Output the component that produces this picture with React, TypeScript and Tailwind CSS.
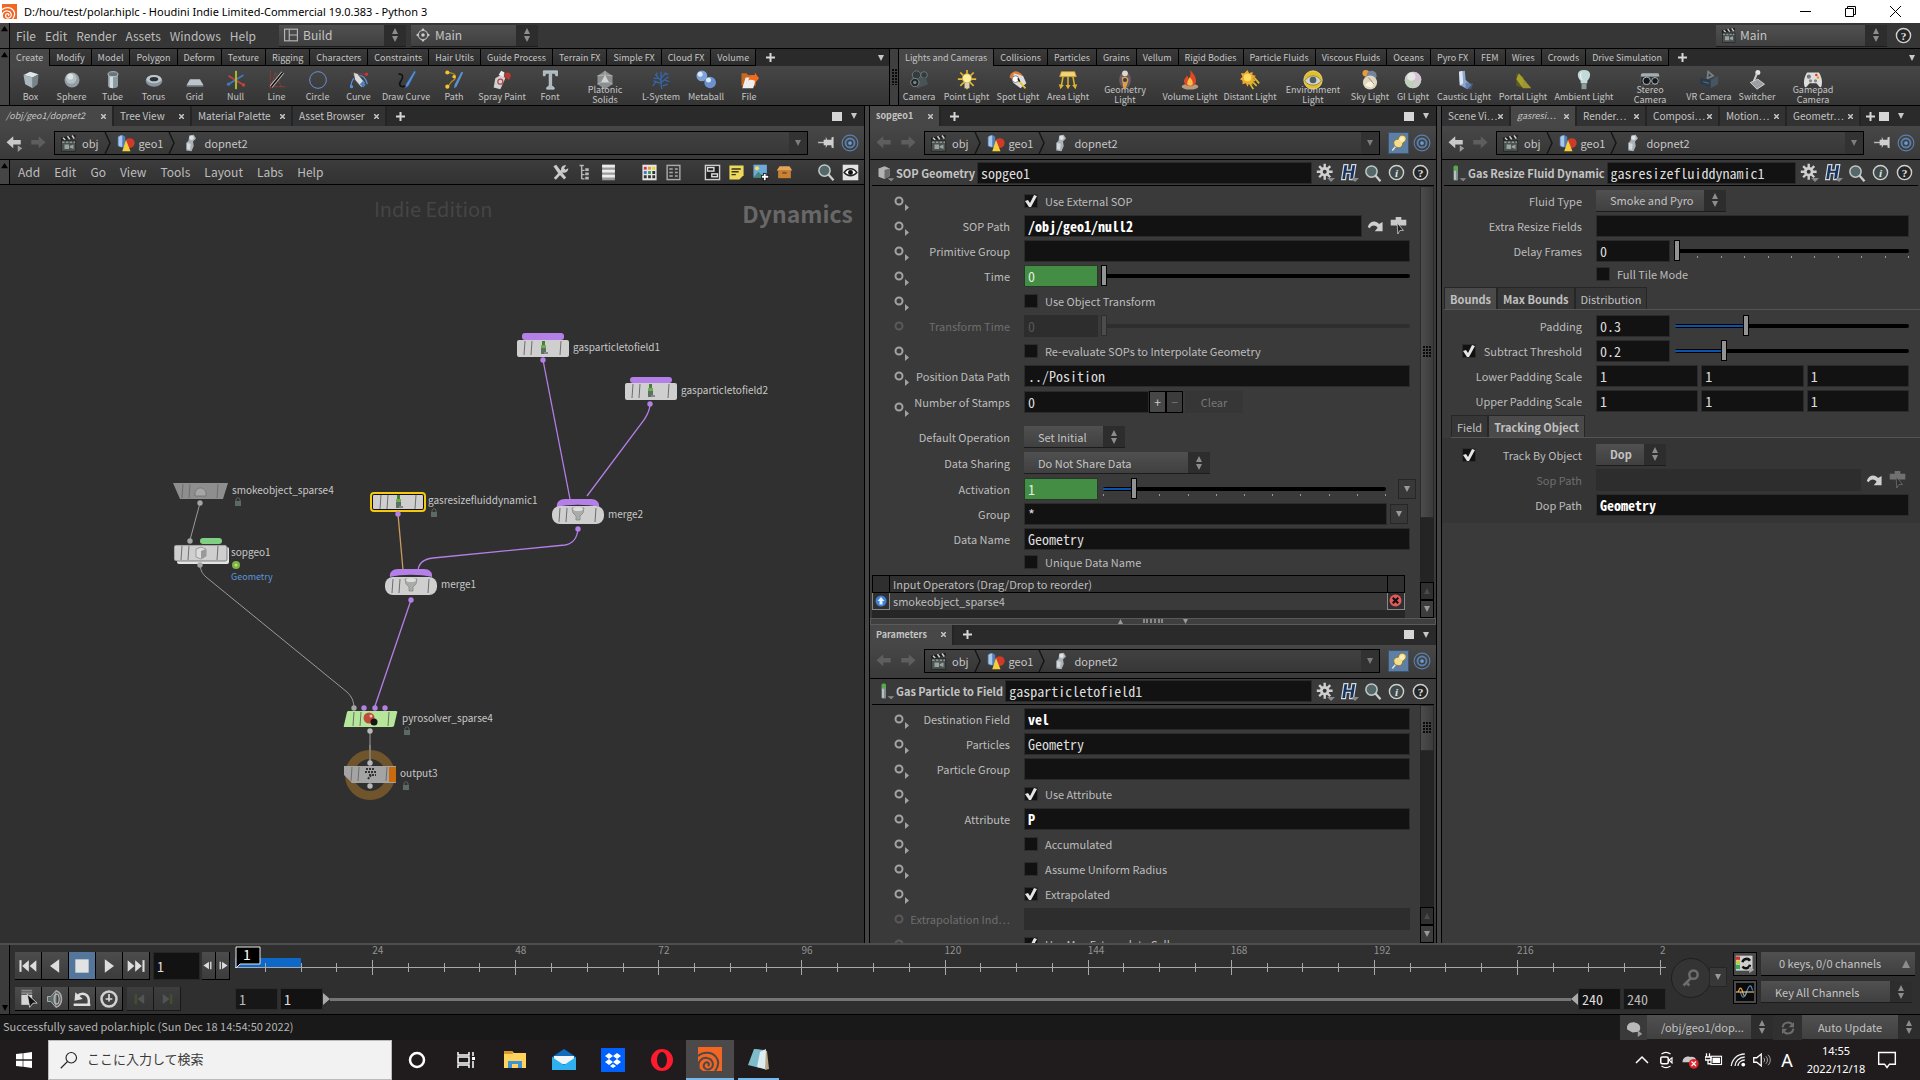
import type { ReactNode } from "react";

const ui = "[font-family:'Noto_Sans_CJK_JP','Noto_Sans',sans-serif]";
const win = "[font-family:'Noto_Sans','Noto_Sans_CJK_JP',sans-serif]";
const mono = "[font-family:'Noto_Sans_Mono_CJK_JP','Liberation_Mono',monospace]";

/* ---------- shelf data ---------- */

type Tool = { name: string; w: string; icon: ReactNode };

const leftTabs = ["Create", "Modify", "Model", "Polygon", "Deform", "Texture", "Rigging", "Characters", "Constraints", "Hair Utils", "Guide Process", "Terrain FX", "Simple FX", "Cloud FX", "Volume"];
const rightTabs = ["Lights and Cameras", "Collisions", "Particles", "Grains", "Vellum", "Rigid Bodies", "Particle Fluids", "Viscous Fluids", "Oceans", "Pyro FX", "FEM", "Wires", "Crowds", "Drive Simulation"];
const twoLine = ["Platonic Solids", "Geometry Light", "Environment Light", "Stereo Camera", "Gamepad Camera"];

const leftTools: Tool[] = [
  { name: "Box", w: "w-[41px]", icon: <><path d="M3 6l8-4 10 3-7 4z" fill="#dfe6ea" /><path d="M3 6l11 3v13L5 17z" fill="#aab6bd" /><path d="M14 9l7-4-1 12-6 5z" fill="#76838b" /></> },
  { name: "Sphere", w: "w-[41px]", icon: <><circle cx="12" cy="12" r="9" fill="#929da3" /><circle cx="11" cy="10" r="6.5" fill="#b4bfc4" /><circle cx="10" cy="8" r="3.5" fill="#dbe2e5" /></> },
  { name: "Tube", w: "w-[41px]", icon: <><path d="M6 5v14c0 4 12 4 12 0V5z" fill="#8d9ba3" /><path d="M8 6v15l4 1V7z" fill="#d2dade" /><ellipse cx="12" cy="5" rx="6" ry="3" fill="#68757d" stroke="#c4ced3" /></> },
  { name: "Torus", w: "w-[41px]", icon: <><ellipse cx="12" cy="13" rx="10" ry="7" fill="#87959e" /><ellipse cx="12" cy="11" rx="9" ry="5" fill="#bcc6cc" /><ellipse cx="12" cy="11" rx="5" ry="2.5" fill="#2c3134" /></> },
  { name: "Grid", w: "w-[41px]", icon: <><path d="M6 11h12l4 7H2z" fill="#bcc5ca" /><path d="M2 18h20v2H2z" fill="#7f8a90" /></> },
  { name: "Null", w: "w-[41px]", icon: <><path d="M3 7l18 11" stroke="#c9413a" strokeWidth="2" /><path d="M21 6L3 17" stroke="#3f78c4" strokeWidth="2" /><path d="M12 1v22" stroke="#a5b926" strokeWidth="2.5" /><circle cx="21" cy="18" r="2" fill="#c9413a" /><circle cx="3" cy="17" r="2" fill="#3f78c4" /></> },
  { name: "Line", w: "w-[41px]", icon: <><path d="M4 22L10 3l8 19M2 20h21M4 1v21" stroke="#a13c3c" fill="none" strokeDasharray="3 1" /><path d="M5 20L19 3" stroke="#c9c9c9" strokeWidth="4" /><path d="M5 20L19 3" stroke="#111" strokeWidth="2" /></> },
  { name: "Circle", w: "w-[41px]", icon: <circle cx="12" cy="12" r="10" fill="none" stroke="#6d8fd4" strokeWidth="1.2" /> },
  { name: "Curve", w: "w-[41px]", icon: <><path d="M2 4l19 1" stroke="#aa3535" /><path d="M2 20C4 6 18 0 22 17" stroke="#5d8fd6" strokeWidth="1.5" fill="none" /><path d="M5 3l5 1 9 11-4 6-8-9z" fill="#d9dcdd" stroke="#444" /><path d="M13 17l4-4 3 5-3 3z" fill="#4a7fc4" /><circle cx="3" cy="20" r="2" fill="#5690dd" /><circle cx="21" cy="5" r="2" fill="#c93a35" /></> },
  { name: "Draw Curve", w: "w-[54px]", icon: <><path d="M3 5c6-1 6 4 3 8s-2 9 6 6" fill="none" stroke="#111" strokeWidth="2" /><path d="M22 1l2 1-9 17-4 3 1-5z" fill="#5a94d8" stroke="#284f85" strokeWidth=".7" /></> },
  { name: "Path", w: "w-[42px]", icon: <><path d="M4 3c12 0 12 7 5 11l-5 7" fill="none" stroke="#b58f1c" strokeWidth="1.5" /><path d="M23 3l-8 17-3 2 1-5 8-15z" fill="#5a94d8" /><circle cx="4" cy="3" r="2.5" fill="#f0c52d" /><circle cx="12" cy="8" r="2" fill="#f0c52d" /><circle cx="4" cy="20" r="2.5" fill="#f0c52d" /></> },
  { name: "Spray Paint", w: "w-[54px]", icon: <><path d="M4 10l8-5 4 5-6 13-8-2z" fill="#cfd2d3" /><path d="M8 6l3-5 4 2-1 5z" fill="#ececec" /><path d="M14 5c8-6 11 2 6 7l-5-4z" fill="#b83a35" /><circle cx="10" cy="14" r="3" fill="none" stroke="#b44" strokeWidth="1.5" /></> },
  { name: "Font", w: "w-[42px]", icon: <path d="M4 1h17v6h-2l-1-3h-4v15l3 2v2H8v-2l3-2V4H7L6 7H4z" fill="#aab9c1" stroke="#dfe6ea" strokeWidth=".7" /> },
  { name: "Platonic Solids", w: "w-[68px]", icon: <><path d="M12 1l9 6v10l-9 6-9-6V7z" fill="#8c8f90" /><path d="M12 6l5 9H7z" fill="#d0d2d3" /><path d="M3 7l9-1 9 1M3 17l4-2M21 17l-4-2M12 1v5" stroke="#c4c4c4" strokeWidth=".8" fill="none" /></> },
  { name: "L-System", w: "w-[44px]", icon: <path d="M13 23c-1-5-1-7-1-11V2M12 13L5 5M12 16L3 13M12 10l6-7M12 15l9-7M7 8V3M6 14l-4 5M16 12l6 2M17 5h4M9 10H3M14 19l6-2" stroke="#3567ad" strokeWidth="1.5" fill="none" /> },
  { name: "Metaball", w: "w-[46px]", icon: <><circle cx="7" cy="7" r="6.5" fill="#7da3d8" /><circle cx="17" cy="15" r="7" fill="#6b92cc" /><circle cx="5" cy="5" r="3" fill="#dbe8f8" /><circle cx="15" cy="12" r="3" fill="#dbe8f8" /></> },
  { name: "File", w: "w-[40px]", icon: <><path d="M3 4h6l2 2h9v13H3z" fill="#c9691f" /><path d="M4 22L8 9h13l-4 13z" fill="#eee" /><path d="M11 13c2-7 6-8 8-6V3l5 7-5 6v-3c-3-1-6-2-8 0z" fill="#f26b1f" /></> },
];

const rightTools: Tool[] = [
  { name: "Camera", w: "w-[40px]", icon: <><circle cx="9" cy="6" r="5" fill="#333b3e" stroke="#758084" /><circle cx="18" cy="6" r="4" fill="#333b3e" stroke="#758084" /><path d="M5 11l15-2 3 8-13 5z" fill="#4a5356" /><circle cx="7" cy="15" r="5" fill="#22282a" stroke="#8b9598" /><circle cx="7" cy="15" r="2" fill="#788386" /></> },
  { name: "Point Light", w: "w-[55px]", icon: <><path d="M12 0v23M1 11h22M4 3l16 16M20 3L4 19" stroke="#e3b92d" strokeWidth="2" /><circle cx="12" cy="10" r="5.5" fill="#fff0a0" stroke="#c9a63a" /><rect x="9" y="15" width="6" height="7" fill="#d8d0b0" /></> },
  { name: "Spot Light", w: "w-[48px]", icon: <><path d="M2 9c0-6 7-9 10-7l5 3-9 8z" fill="#e07c38" /><path d="M7 4l11 3 4 9-7 6-9-7z" fill="#dcdcdc" /><circle cx="9" cy="11" r="4" fill="#fff" stroke="#777" /><path d="M13 13l8 9" stroke="#e6c22d" strokeWidth="2" /><path d="M12 10l2 4" stroke="#222" strokeWidth="2" /></> },
  { name: "Area Light", w: "w-[52px]", icon: <><path d="M4 2h16l2 6H2z" fill="#f2d57b" stroke="#c8992f" /><path d="M6 8l-2 12M12 8v13M18 8l2 12" stroke="#e0b62c" strokeWidth="1.8" /><path d="M1 17l2 6 4-5M9 18l3 5 3-5M17 18l4 5 2-6" fill="#e0b62c" /></> },
  { name: "Geometry Light", w: "w-[62px]", icon: <><ellipse cx="12" cy="12" rx="7" ry="10" fill="#8a6a83" opacity=".6" /><circle cx="12" cy="4" r="3.5" fill="#dcd7d0" /><path d="M8 9c4-2 9 0 8 4l-3 9h-3z" fill="#e0a03d" /><circle cx="12" cy="12" r="2.5" fill="#30425c" /></> },
  { name: "Volume Light", w: "w-[68px]", icon: <><ellipse cx="12" cy="20" rx="10" ry="3.5" fill="#e8c49a" opacity=".7" /><path d="M12 0c5 5 8 9 7 15-2 6-12 6-14 0-1-4 2-5 3-8 2 1 2 2 2 3 3-2 3-6 2-10z" fill="#dc4a26" /><path d="M12 9c4 4 5 10 0 10-5 0-4-6 0-10z" fill="#f8bd4b" /></> },
  { name: "Distant Light", w: "w-[52px]", icon: <><path d="M9 0l2 4 4-2v4l4 1-3 3 3 3-4 1v4l-4-2-2 4-2-4-4 1V13l-3-2 3-3-2-4 4 0z" fill="#f1a92a" /><circle cx="9" cy="9" r="4.5" fill="#ffdc66" /><path d="M13 12l7 7M17 9l6 7M11 15l5 8" stroke="#dcbc2e" strokeWidth="2" /></> },
  { name: "Environment Light", w: "w-[74px]", icon: <><circle cx="12" cy="12" r="11" fill="#e3c02b" stroke="#f3e077" /><path d="M2 13c5-8 15-8 20 0-5 7-15 7-20 0z" fill="#cfd3d3" stroke="#8c7c33" /><circle cx="12" cy="12" r="4" fill="#4f5d62" /></> },
  { name: "Sky Light", w: "w-[40px]", icon: <><circle cx="7" cy="4" r="4" fill="#e79b3a" /><circle cx="14" cy="7" r="6" fill="#72839a" /><circle cx="12" cy="15" r="8.5" fill="#dfd6bd" /><path d="M6 19c3-6 8-6 12-4l-4 6z" fill="#f7f3df" /><path d="M10 9l7 8" stroke="#8a6a8a" /></> },
  { name: "GI Light", w: "w-[46px]", icon: <><circle cx="12" cy="12" r="10" fill="#c9cdc8" /><path d="M12 2a10 10 0 0 1 10 10l-10 3z" fill="#d5c2d0" /><path d="M2 12a10 10 0 0 0 10 10l1-9z" fill="#bcd0bc" /><circle cx="10" cy="8" r="5" fill="#ecedeb" opacity=".8" /></> },
  { name: "Caustic Light", w: "w-[56px]", icon: <><path d="M6 2l7-1 1 11 7 6-5 5-9-5z" fill="#8ea7cc" /><path d="M6 2l4-1 1 15-4 3z" fill="#dbe4f2" /><path d="M14 15l9 1-2 7h-7z" fill="#4c6796" opacity=".6" /></> },
  { name: "Portal Light", w: "w-[62px]", icon: <><path d="M4 4l9 4-2 13-7-2z" fill="#5b5e22" /><path d="M7 4l15 18h-10L4 11z" fill="#c8bc2f" opacity=".7" /></> },
  { name: "Ambient Light", w: "w-[60px]", icon: <><path d="M12 0c9 0 9 8 4 13v3H8v-3C3 8 3 0 12 0z" fill="#c3dadb" /><path d="M9 16h6v7H9z" fill="#8e9999" /><path d="M9 3c-2 3-1 7 1 9" stroke="#fff" fill="none" /></> },
  { name: "Stereo Camera", w: "w-[72px]", icon: <><rect x="1" y="4" width="22" height="13" rx="2" fill="#a6adb0" /><rect x="1" y="8" width="22" height="9" fill="#2c3235" /><circle cx="8" cy="13" r="4.5" fill="#16191b" stroke="#c6ced1" /><circle cx="18" cy="13" r="4" fill="#16191b" stroke="#c6ced1" /></> },
  { name: "VR Camera", w: "w-[46px]", icon: <><path d="M11 2l6 5-7 3z" fill="none" stroke="#77838a" strokeWidth="2" /><path d="M1 9l13 3 9-5v10l-9 5-13-5z" fill="#475561" /><path d="M1 9l13 3v10L1 17z" fill="#2d3a47" /><path d="M5 14l7 2" stroke="#5f7e9d" /></> },
  { name: "Switcher", w: "w-[50px]", icon: <><circle cx="13" cy="3" r="3" fill="#e4e4e4" /><path d="M12 4L8 14" stroke="#ccc" strokeWidth="2.5" /><path d="M4 15l9-4 8 6-9 6z" fill="#9b9fa1" stroke="#ddd" /></> },
  { name: "Gamepad Camera", w: "w-[62px]", icon: <><path d="M5 3h14c3 4 5 11 3 17-2 3-4-3-6-4H8c-2 1-4 7-6 4C0 14 2 7 5 3z" fill="#dedede" /><circle cx="7" cy="8" r="2.5" fill="#777" /><circle cx="16" cy="6" r="1.5" fill="#d33" /><circle cx="18" cy="9" r="1.5" fill="#e90" /><circle cx="9" cy="13" r="2" fill="#888" /><circle cx="15" cy="13" r="2" fill="#888" /></> },
];

/* ---------- small icons ---------- */

const Svg = ({ s = 18, children, box = 24 }: { s?: number; box?: number; children: ReactNode }) => (
  <svg width={s} height={s} viewBox={`0 0 ${box} ${box}`} className="shrink-0" fill="none">{children}</svg>
);

const Plus = () => <Svg s={11} box={11}><path d="M5.5 1v9M1 5.5h9" stroke="#d6d6d6" strokeWidth="2" /></Svg>;
const Down = ({ c = "#c8c8c8" }: { c?: string }) => <Svg s={8} box={8}><path d="M1 1h6L4 7z" fill={c} /></Svg>;
const UpDown = () => (
  <svg width="8" height="14" viewBox="0 0 8 14" className="shrink-0"><path d="M4 0l3 6H1zM4 14L1 8h6z" fill="#8d8d8d" /></svg>
);
const Spiral = ({ s, line }: { s: number; line: string }) => (
  <Svg s={s}>
    <rect width="24" height="24" fill="#f26522" />
    <path d="M0 9C4 5 14 4 18 10c4 5 2 10-1 14" stroke={line} strokeWidth="2" />
    <path d="M1 21c-2-6 3-11 8-10 6 1 8 8 3 11-5 2-8-3-5-6 3-2 5 1 3 3" stroke={line} strokeWidth="2" />
    <path d="M0 20v4h5z" fill={line} />
  </Svg>
);
const HandleUp = () => <Svg s={7} box={8}><path d="M4 1l4 6H0z" fill="#000" /></Svg>;
const Clapper = ({ s = 18 }: { s?: number }) => (
  <Svg s={s}><path d="M1 5l20-4v4L2 9z" fill="#1d1f1f" /><path d="M4 5l3 3M10 3l3 4M16 2l3 4" stroke="#cfcfcf" strokeWidth="2" /><rect x="2" y="9" width="19" height="14" fill="#4b5351" stroke="#1f2322" /><path d="M3 11h17" stroke="#8e9692" strokeWidth="2" strokeDasharray="3 2" /><path d="M6 14h6v6H6zM13 16l5-2v6l-5-2z" fill="#9aa29f" /></Svg>
);
const GeoIcon = () => (
  <Svg s={18}><path d="M1 4c2-3 8-3 10 0v12c-2 3-8 2-10 0z" fill="#4f7fbb" /><path d="M2 4c2-2 3-2 5-2v15c-2 0-4 0-5-2z" fill="#a9c7e6" /><circle cx="17" cy="12" r="6.5" fill="#cf3b28" /><path d="M12 8l6 15H7z" fill="#f3cf3c" /></Svg>
);
const DopIcon = () => (
  <Svg s={18}><path d="M11 2l6-1 3 5-4 4 1 6-3 7-7-1 0-10 3-3z" fill="#a9b1b6" /><circle cx="14" cy="5" r="3" fill="#dde2e5" /><path d="M8 12l5 1-1 8-4-1z" fill="#d2d8db" /></Svg>
);
const Arrow = ({ back, on }: { back?: boolean; on?: boolean }) => (
  <Svg s={18}>
    <path d={back ? "M2 11l9-8v5h10v6H11v5z" : "M22 11l-9-8v5H3v6h10v5z"} fill={on ? "#c9c9c9" : "#5e5e5e"} />
    {on && <path d="M17 15l6 4-6 5z" fill="#9a9a9a" />}
  </Svg>
);
const Target = () => <Svg s={18}><circle cx="12" cy="12" r="10.5" stroke="#5a80ae" strokeWidth="1.5" /><circle cx="12" cy="12" r="6" stroke="#5a80ae" strokeWidth="2.5" /><circle cx="12" cy="12" r="2.5" fill="#6d9ad2" /></Svg>;
const PinFlat = () => <Svg s={17}><path d="M0 12h9" stroke="#bbb" strokeWidth="2" /><path d="M8 8h3V4l2 4h6V5l3-1v16l-3-1v-3h-6l-2 4v-4H8z" fill="#cfcfcf" /></Svg>;
const PinYellow = () => <Svg s={18}><path d="M3 22l5-6" stroke="#ddd" strokeWidth="2" /><path d="M5 11c0-2 3-4 6-4 1-5 5-7 9-4 3 3 1 7-3 9 0 4-3 7-6 6-4 0-6-3-6-7z" fill="#f3de90" stroke="#8a6c22" /><circle cx="16" cy="7" r="3" fill="#fbf0bd" /></Svg>;
const Gear = () => (
  <Svg s={19}>
    <path d="M11 1v20M1 11h20M4 4l14 14M18 4L4 18" stroke="#cfcfcf" strokeWidth="3" />
    <circle cx="11" cy="11" r="6" fill="#cfcfcf" /><circle cx="11" cy="11" r="2.5" fill="#333" />
    <path d="M14 19h10l-5 5z" fill="#8a8a8a" />
  </Svg>
);
const HIcon = () => (
  <Svg s={19}>
    <path d="M5 2h5l-1 7h5l1-7h5l-3 19h-5l1-8H8l-1 8H2z" fill="#16335e" stroke="#d5dae2" strokeWidth="1.5" />
    <path d="M14 19h10l-5 5z" fill="#8a8a8a" />
  </Svg>
);
const Search = () => <Svg s={18}><circle cx="10" cy="10" r="7.5" fill="#54686a" stroke="#c2c8c8" strokeWidth="2" /><path d="M15 15l7 8" stroke="#cdcdcd" strokeWidth="3" /></Svg>;
const Round = ({ t }: { t: string }) => (
  <Svg s={17}>
    <circle cx="12" cy="12" r="10" fill={t === "i" ? "#3f4a4a" : "#262626"} stroke="#d0d0d0" strokeWidth="2" />
    <text x="12" y="18" textAnchor="middle" fontSize="16" fontWeight="700" fontStyle={t === "i" ? "italic" : "normal"} fontFamily="Liberation Serif, serif" fill="#e2e2e2">{t}</text>
  </Svg>
);
const CapsuleIcon = () => (
  <Svg s={18}><rect x="6" y="2" width="6" height="8" rx="2" fill="#5aa84c" /><rect x="6" y="8" width="6" height="14" rx="1" fill="#7e8d8e" /><path d="M8 9v12" stroke="#c9d3d4" strokeWidth="2" /><path d="M14 19h9l-4 4z" fill="#8a8a8a" /></Svg>
);
const CubeIcon = () => (
  <Svg s={18}><path d="M2 6l8-3 7 3v10l-7 4-8-3z" fill="#b3b3b3" /><path d="M10 8l7-2v10l-7 4z" fill="#6c6c6c" /><path d="M14 19h9l-4 4z" fill="#8a8a8a" /></Svg>
);
const Jump = () => <Svg s={17}><path d="M1 14c3-9 12-10 16-4l5-3v13H11l4-5c-3-4-9-4-11 1z" fill="#cfcfcf" /></Svg>;
const Chooser = () => <Svg s={17}><path d="M8 0h8v4h7v8H1V4h7z" fill="#c9c9c9" /><path d="M10 8l9 11-5 0-3 5z" fill="#222" stroke="#ddd" /></Svg>;

/* ---------- controls ---------- */

function Knob({ dim, low }: { dim?: boolean; low?: boolean }) {
  return (
    <button aria-label="Parameter actions" className={`${dim ? "opacity-30" : ""} ${low ? "mt-[10px]" : ""}`}>
      <svg width="16" height="20" viewBox="0 0 16 20">
        <circle cx="5" cy="10" r="3.5" fill="none" stroke="#a2a2a2" strokeWidth="2" />
        {!dim && <path d="M11 13l4 3.5-4 3.5z" fill="#a2a2a2" />}
      </svg>
    </button>
  );
}

function Check({ label, on, dim, hideLabel }: { label?: string; on?: boolean; dim?: boolean; hideLabel?: boolean }) {
  return (
    <label className={`flex items-center gap-[7px] whitespace-nowrap text-[11px] leading-4 ${dim ? "text-[#6e6e6e]" : "text-[#bdbdbd]"}`}>
      <span className="relative h-[14px] w-[14px]">
        <input type="checkbox" defaultChecked={on} aria-label={hideLabel ? label : undefined} className="peer block h-[14px] w-[14px] appearance-none border border-[#2c2c2c] bg-[#111]" />
        <svg viewBox="0 0 14 14" className="pointer-events-none absolute inset-0 hidden peer-checked:block"><path d="M1 7l3-1 2 3 4-8 3 1-6 11H5z" fill="#e4e4e4" /></svg>
      </span>
      {!hideLabel && label}
    </label>
  );
}

function Row({ label, id, knob, low, dim, check, h = "h-[25px]", children }: {
  label?: string; id?: string; knob?: boolean; low?: boolean; dim?: boolean; check?: boolean; h?: string; children: ReactNode;
}) {
  return (
    <div className={`flex items-center ${h}`}>
      <div className={`flex w-[140px] shrink-0 items-center ${check ? "pl-5" : "pl-6"}`}>
        {knob && <Knob dim={dim} low={low} />}
        {check && <Check on label={label} hideLabel />}
        <label htmlFor={id} className={`ml-auto whitespace-nowrap text-[11px] leading-4 ${dim ? "text-[#6e6e6e]" : "text-[#bdbdbd]"}`}>{label}</label>
      </div>
      <div className="ml-[14px] flex min-w-0 flex-1 items-center">{children}</div>
    </div>
  );
}

function Field({ id, value = "", tone = "dark", bold, w = "flex-1", name }: {
  id?: string; value?: string; tone?: "dark" | "green" | "off"; bold?: boolean; w?: string; name?: string;
}) {
  const tones = {
    dark: "bg-[#121212] text-[#dedede] border-[#2b2b2b]",
    green: "bg-[#438d45] text-[#dff0df] border-[#263a27]",
    off: "bg-[#2d2d2d] text-[#555] border-[#2d2d2d]",
  };
  return (
    <input id={id} aria-label={name} defaultValue={value} disabled={tone === "off"}
      className={`h-[22px] min-w-0 border px-[3px] text-[14px] leading-5 outline-none ${mono} ${tones[tone]} ${bold ? "font-bold text-white" : ""} ${w}`} />
  );
}

function Slider({ pct, ticks, off, name }: { pct: number; ticks?: boolean; off?: boolean; name: string }) {
  return (
    <div className={`relative flex h-[22px] min-w-0 flex-1 items-center ${off ? "opacity-20" : ""}`}>
      <div className="absolute inset-x-0 h-[4px] rounded-sm bg-black">
        <div className="mt-px h-[2px] bg-[#0b54ad]" style={{ width: `${pct}%` }} />
      </div>
      {ticks && (
        <div className="absolute inset-x-0 bottom-[4px] flex justify-between">
          {Array.from({ length: 11 }, (_, i) => <i key={i} className="h-[2px] w-px bg-[#999]" />)}
        </div>
      )}
      <input type="range" aria-label={name} defaultValue={pct} disabled={off}
        className="relative h-[22px] w-full appearance-none bg-transparent [&::-webkit-slider-thumb]:h-[21px] [&::-webkit-slider-thumb]:w-[6px] [&::-webkit-slider-thumb]:appearance-none [&::-webkit-slider-thumb]:border [&::-webkit-slider-thumb]:border-black [&::-webkit-slider-thumb]:bg-[#939393]" />
    </div>
  );
}

function Select({ id, value, w, name, bold, pad = "pl-[14px]", h = "h-[22px]", text = "text-[11px]", icon }: {
  id?: string; value: string; w: string; name?: string; bold?: boolean; pad?: string; h?: string; text?: string; icon?: ReactNode;
}) {
  return (
    <div className={`relative flex shrink-0 items-center border-b border-[#1c1c1c] bg-linear-to-b from-[#505050] to-[#404040] ${h} ${w}`}>
      {icon && <span className="absolute left-[5px]">{icon}</span>}
      <select id={id} aria-label={name} className={`h-full w-full appearance-none bg-transparent leading-4 text-[#c4c4c4] outline-none ${text} ${pad} ${bold ? "font-bold" : ""}`}>
        <option>{value}</option>
      </select>
      <span className="pointer-events-none absolute inset-y-0 right-0 flex w-[22px] items-center justify-center bg-[#2d2d2d]"><UpDown /></span>
    </div>
  );
}

const DropBtn = ({ cls = "" }: { cls?: string }) => (
  <button aria-label="Open menu" className={`flex h-[20px] w-[18px] shrink-0 items-center justify-center border border-[#262626] bg-[#383838] ${cls}`}><Down c="#9a9a9a" /></button>
);

/* ---------- panes ---------- */

function Shelf({ tabs, tools, grow }: { tabs: string[]; tools: Tool[]; grow: string }) {
  return (
    <section className={`flex min-w-0 flex-col border-b border-black ${grow}`}>
      <div className="flex h-[17px] items-stretch bg-[#2a2a2a]">
        {tabs.map((t, i) => (
          <button key={t} className={`border-r border-black px-[6px] pt-px text-[9px] leading-4 whitespace-nowrap text-[#c4c4c4] ${i === 0 ? "bg-[#474747]" : "border-b bg-linear-to-b from-[#3a3a3a] to-[#2d2d2d]"}`}>{t}</button>
        ))}
        <button aria-label="Add shelf" className="flex w-[28px] items-center justify-center"><Plus /></button>
        <button aria-label="Shelf menu" className="mr-1 ml-auto flex items-center"><Down /></button>
      </div>
      <div className="flex h-[39px] bg-linear-to-b from-[#474747] to-[#343434]">
        {tools.map((t) => (
          <button key={t.name} className={`flex shrink-0 flex-col items-center pt-[4px] text-[9px] text-[#c4c4c4] ${t.w}`}>
            <svg width="20" height="20" viewBox="0 0 24 24" className="shrink-0" fill="none">{t.icon}</svg>
            {twoLine.includes(t.name) ? (
              <span className="-mt-[5px] leading-[10px]">{t.name.split(" ")[0]}<br />{t.name.split(" ")[1]}</span>
            ) : (
              <span className="leading-[13px] whitespace-nowrap">{t.name}</span>
            )}
          </button>
        ))}
      </div>
    </section>
  );
}

function PaneTabs({ tabs, end }: { tabs: { t: string; w: string; on?: boolean; it?: boolean; b?: boolean }[]; end?: boolean }) {
  return (
    <div className="flex h-[20px] shrink-0 items-stretch bg-[#2a2a2a]">
      {tabs.map((t) => (
        <div key={t.t} className={`flex shrink-0 items-center justify-between border-r-2 border-[#242424] px-[6px] leading-4 text-[#c4c4c4] ${t.w} ${t.on ? "bg-[#474747]" : "bg-[#323232]"} ${t.it || t.b ? "text-[9px]" : "text-[10px]"}`}>
          <button className={`whitespace-nowrap ${t.it ? "italic" : ""} ${t.b ? "font-bold" : ""}`}>{t.t}</button>
          <button aria-label={`Close ${t.t}`}><Svg s={5} box={5}><path d="M0 0l5 5M5 0L0 5" stroke="#c4c4c4" strokeWidth="1.5" /></Svg></button>
        </div>
      ))}
      <button aria-label="New tab" className={`flex items-center justify-center ${end ? "w-[18px]" : "w-[26px]"}`}><Plus /></button>
      <span className={`flex items-center gap-[8px] pr-[6px] ${end ? "" : "ml-auto"}`}>
        <button aria-label="Maximize pane" className="h-[9px] w-[10px] bg-[#d6d6d6]" />
        <button aria-label="Pane menu"><Down /></button>
      </span>
    </div>
  );
}

function PathBar({ back, pinned }: { back?: boolean; pinned?: boolean }) {
  const sep = <svg width="8" height="22" viewBox="0 0 8 22" className="shrink-0"><path d="M1 0l5 11-5 11" fill="none" stroke="#161616" strokeWidth="1.5" /></svg>;
  return (
    <div className="flex h-[34px] shrink-0 items-center border-b border-black bg-linear-to-b from-[#474747] to-[#3a3a3a] px-[5px]">
      <button aria-label="Back" className="mr-[6px]"><Arrow back on={back} /></button>
      <button aria-label="Forward" className="mr-[7px]"><Arrow /></button>
      <nav className="flex h-[24px] min-w-0 flex-1 items-center border border-black bg-linear-to-b from-[#414141] to-[#373737] text-[11px] leading-4 text-[#c6c6c6]">
        <a href="#obj" className="flex items-center gap-[4px] px-[5px]"><Clapper />obj</a>
        {sep}
        <a href="#geo1" className="flex items-center gap-[4px] px-[5px]"><GeoIcon />geo1</a>
        {sep}
        <a href="#dopnet2" className="flex items-center gap-[5px] pl-[5px]"><DopIcon />dopnet2</a>
        <button aria-label="Path history" className="ml-auto flex h-full w-[18px] items-center justify-center bg-[#323232]"><Down c="#7c7c7c" /></button>
      </nav>
      <button aria-label="Pin" className={`ml-[8px] flex h-[22px] w-[21px] items-center justify-center ${pinned ? "border border-[#3c5470] bg-[#5d7fa6]" : ""}`}>{pinned ? <PinYellow /> : <PinFlat />}</button>
      <button aria-label="Link" className="ml-[4px]"><Target /></button>
    </div>
  );
}

function ParmHeader({ icon, title, name }: { icon: ReactNode; title: string; name: string }) {
  return (
    <div className="mx-[2px] flex h-[26px] shrink-0 items-center border-b border-black px-[5px]">
      {icon}
      <h2 className="mr-[2px] ml-px text-[11px] leading-4 font-bold whitespace-nowrap text-[#c4c4c4]">{title}</h2>
      <Field value={name} name={`${title} name`} />
      <span className="ml-[4px] flex items-center gap-[5px]">
        <button aria-label="Settings"><Gear /></button>
        <button aria-label="Houdini help"><HIcon /></button>
        <button aria-label="Search parameters"><Search /></button>
        <button aria-label="Info" className="ml-px"><Round t="i" /></button>
        <button aria-label="Help" className="ml-[2px]"><Round t="?" /></button>
      </span>
    </div>
  );
}

function ScrollBar({ thumb }: { thumb: string }) {
  return (
    <div className="mr-[2px] flex w-[14px] shrink-0 flex-col bg-[#242424]">
      <div className={`flex items-center justify-center border border-[#2a2a2a] bg-linear-to-r from-[#4c4c4c] to-[#3b3b3b] ${thumb}`}>
        <svg width="9" height="12" viewBox="0 0 9 12"><path d="M0 1h9M0 4h9M0 7h9M0 10h9" stroke="#0a0a0a" strokeWidth="2" strokeDasharray="2 1" /></svg>
      </div>
      <button aria-label="Scroll up" className="mt-auto flex h-[18px] items-center justify-center border border-black bg-[#2f2f2f]"><Svg s={8} box={8}><path d="M4 1l3 6H1z" fill="#4a4a4a" /></Svg></button>
      <button aria-label="Scroll down" className="flex h-[18px] items-center justify-center border border-black bg-[#3d3d3d]"><Down c="#9a9a9a" /></button>
    </div>
  );
}

const Splitter = () => <div className="w-[6px] border-x border-black bg-[#444]" />;

/* ---------- network canvas ---------- */

const P = "#b47fe6";
const Stripes = ({ x, y, h = 16, w = 51 }: { x: number; y: number; h?: number; w?: number }) => (
  <path d={`M${x + 8} ${y + 1}l-1 ${h - 2}M${x + 15} ${y + 1}l-1 ${h - 2}M${x + w - 7} ${y + 1}l-1 ${h - 2}`} stroke="#6d6d6d" strokeWidth="1" />
);
const Vial = ({ x, y }: { x: number; y: number }) => (
  <g><rect x={x - 2} y={y - 7} width="3" height="5" fill="#4f7a3c" /><rect x={x - 3} y={y - 3} width="5" height="3" fill="#69b04c" /><rect x={x - 3} y={y} width="5" height="6" fill="#5c7064" /><path d={`M${x} ${y + 5}h4`} stroke="#888" strokeWidth="2" /></g>
);
const Funnel = ({ x, y }: { x: number; y: number }) => (
  <g><path d={`M${x - 6} ${y - 6}h12l-1 5-3 3v4h-4v-4l-3-3z`} fill="#a9ada9" stroke="#888" strokeWidth=".8" /><ellipse cx={x} cy={y - 5} rx="5" ry="2" fill="#dcdedc" /></g>
);
const Lock = ({ x, y }: { x: number; y: number }) => (
  <g><rect x={x - 3} y={y - 1} width="6" height="5" fill="#5c6a66" /><path d={`M${x - 2} ${y}v-2c0-3 4-3 4 0v2`} stroke="#5c6a66" fill="none" /></g>
);
const Dot = ({ x, y, c = P }: { x: number; y: number; c?: string }) => <circle cx={x} cy={y} r="2.7" fill={c} />;
const Name = ({ x, y, children }: { x: number; y: number; children: string }) => (
  <text x={x} y={y + 4} fontSize="10" fill="#c8c8c8">{children}</text>
);

function Network() {
  return (
    <div className="relative min-h-0 flex-1 overflow-hidden bg-[#303030]">
      <span className="absolute top-[10px] left-[374px] text-[20px] leading-7 text-[#454545]">Indie Edition</span>
      <span className="absolute top-[12px] right-[11px] text-[23px] leading-8 font-bold text-[#686868]">Dynamics</span>
      <svg width="864" height="758" viewBox="0 185 864 758" className="absolute top-0 left-0">
        <g fill="none" stroke={P} strokeWidth="1.3">
          <path d="M543 360L570 499" />
          <path d="M650 404C650 411 647 415 644 420L587 496" />
          <path d="M578 529C577 540 571 544 565 545L433 558C423 559 419 563 418 570" />
          <path d="M411 600L375 706" />
          <path d="M398 514L403 570" stroke="#c99c5c" />
          <path d="M200 503L190 540M200 565C201 572 203 574 206 577L347 692C352 697 353 700 354 706M370 731V762" stroke="#9a9a9a" strokeWidth="1" />
        </g>
        <circle cx="370" cy="775" r="20.5" fill="none" stroke="#70552c" strokeWidth="9" />
        <path d="M370 745v18" stroke="#9a9a9a" />

        <rect x="522" y="333" width="42" height="7" rx="3" fill={P} />
        <rect x="517" y="340" width="52" height="17" rx="2" fill="#cfcfcf" />
        <Stripes x={517} y={340} /><Vial x={544} y={348} /><Dot x={543} y={360} />
        <Name x={573} y={347}>gasparticletofield1</Name>

        <rect x="630" y="377" width="42" height="6" rx="3" fill={P} />
        <rect x="625" y="383" width="52" height="17" rx="2" fill="#cfcfcf" />
        <Stripes x={625} y={383} /><Vial x={651} y={391} /><Dot x={650} y={404} />
        <Name x={681} y={390}>gasparticletofield2</Name>

        <path d="M173 483h55l-5 16h-43z" fill="#8e8e8e" />
        <Stripes x={175} y={483} w={50} />
        <path d="M195 494c0-8 11-8 11 0v2h-11z" fill="#a5a7a5" stroke="#6e6e6e" strokeWidth=".8" />
        <Dot x={200} y={503} c="#a5a5a5" /><Name x={232} y={490}>smokeobject_sparse4</Name><Lock x={238} y={502} />

        <rect x="200" y="538" width="22" height="6" rx="3" fill="#7fd084" />
        <rect x="177" y="547" width="52" height="17" rx="2" fill="#e3e3e3" />
        <rect x="174" y="545" width="53" height="16" rx="2" fill="#cfcfcf" stroke="#444" strokeWidth=".6" />
        <Stripes x={174} y={545} />
        <path d="M196 549l5-2 5 2v7l-5 3-5-2z" fill="#dcdcdc" stroke="#8a8a8a" strokeWidth=".8" />
        <path d="M201 551l5-2v7l-5 3z" fill="#999" />
        <Dot x={190} y={541} c="#a5a5a5" /><Dot x={200} y={565} c="#a5a5a5" />
        <Name x={231} y={552}>sopgeo1</Name>
        <circle cx="236" cy="565" r="4" fill="#7cb342" /><circle cx="236" cy="565" r="1.5" fill="#b7df7a" />
        <text x="231" y="580" fontSize="9" fill="#5b97dc">Geometry</text>

        <rect x="371" y="493" width="54" height="18" rx="3" fill="#111" stroke="#f4c90f" strokeWidth="2" />
        <rect x="373" y="495" width="50" height="14" rx="1" fill="#cfcfcf" />
        <Stripes x={373} y={494} w={50} /><Vial x={399} y={502} /><Dot x={398} y={514} />
        <Name x={428} y={500}>gasresizefluiddynamic1</Name><Lock x={434} y={513} />

        <path d="M557 507c-1-5 3-8 8-8h26c5 0 9 3 8 8-12-3-30-3-42 0z" fill={P} />
        <rect x="552" y="506" width="52" height="18" rx="8" fill="#cfcfcf" />
        <Stripes x={552} y={507} /><Funnel x={578} y={514} /><Dot x={578} y={529} />
        <Name x={608} y={514}>merge2</Name>

        <path d="M390 577c-1-5 3-8 8-8h26c5 0 9 3 8 8-12-3-30-3-42 0z" fill={P} />
        <rect x="385" y="577" width="52" height="18" rx="8" fill="#cfcfcf" />
        <Stripes x={385} y={578} /><Funnel x={411} y={585} /><Dot x={411} y={600} />
        <Name x={441} y={584}>merge1</Name>

        <path d="M348 711h48q2 0 1 2l-3 13q-1 1-2 1h-47q-2 0-1-2l3-13z" fill="#b5e69a" />
        <Stripes x={346} y={711} w={50} />
        <circle cx="369" cy="718" r="5.5" fill="#c04a3c" /><circle cx="374" cy="722" r="3.5" fill="#161616" /><circle cx="371" cy="716" r="1.5" fill="#efc3a5" />
        <Dot x={354} y={708} c="#a5a5a5" /><Dot x={364} y={708} /><Dot x={375} y={708} /><Dot x={385} y={708} /><Dot x={370} y={731} c="#b8b8b8" />
        <Name x={402} y={718}>pyrosolver_sparse4</Name><Lock x={407} y={731} />

        <path d="M344 766h52v17h-44l-8-8z" fill="#a4a4a4" />
        <Stripes x={344} y={766} w={50} />
        <rect x="389" y="767" width="7" height="15" fill="#c96b0c" />
        <path d="M366 769h9M365 772h11M369 775h7M368 779l4-5" stroke="#333" strokeWidth="2" strokeDasharray="2 1" fill="none" />
        <Dot x={370} y={763} c="#b8b8b8" /><Dot x={370} y={786} c="#b8b8b8" />
        <Name x={400} y={773}>output3</Name><Lock x={406} y={786} />
      </svg>
    </div>
  );
}

function NetworkMenu() {
  return (
    <div className="flex h-[25px] shrink-0 items-stretch border-b border-black bg-linear-to-b from-[#3c3c3c] to-[#323232]">
      <div className="w-[10px] border-r border-black bg-[#454545] pt-[2px] pl-px"><HandleUp /></div>
      <nav className="flex items-center gap-[14px] pl-[8px] text-[12px] leading-4 text-[#bdbdbd]">
        {["Add", "Edit", "Go", "View", "Tools", "Layout", "Labs", "Help"].map((m) => <button key={m}>{m}</button>)}
      </nav>
      <div className="mr-[5px] ml-auto flex items-center gap-[7px]">
        <button aria-label="Tools"><Svg s={17}><path d="M4 21L15 9" stroke="#c9c9c9" strokeWidth="4" /><path d="M13 10c-1-6 3-9 7-8l-3 4 2 2 4-2c0 5-4 7-8 6z" fill="#c9c9c9" /><path d="M2 3l4-2 6 8 8 10-3 3-9-10z" fill="#c9c9c9" /></Svg></button>
        <button aria-label="Tree"><Svg s={17}><path d="M5 2h6M8 3v18M8 9h4M8 15h4M8 21h4" stroke="#b7b7b7" strokeWidth="2" /><path d="M13 6h5v4h-5zM13 12h5v4h-5zM13 18h5v4h-5z" fill="#b7b7b7" /></Svg></button>
        <button aria-label="List" className="mr-[17px]"><Svg s={17}><path d="M3 1h18v22H3z" fill="#9a9a9a" /><path d="M3 1h18v4H3zM3 8h18v4H3zM3 15h18v4H3z" fill="#ececec" /></Svg></button>
        <button aria-label="Palette"><Svg s={17}><rect x="2" y="1" width="20" height="22" fill="#e4e4e4" /><path d="M4 4h4v4H4z" fill="#d33" /><path d="M10 4h4v4h-4z" fill="#e59b29" /><path d="M16 4h4v4h-4z" fill="#e8d42c" /><path d="M4 10h4v4H4z" fill="#3a6fd0" /><path d="M10 10h4v4h-4z" fill="#339a46" /><path d="M16 10h4v4h-4zM4 16h4v4H4zM10 16h4v4h-4zM16 16h4v4h-4z" fill="#333" /></Svg></button>
        <button aria-label="Grid" className="mr-[15px]"><Svg s={17}><rect x="3" y="2" width="18" height="20" stroke="#aaa" strokeWidth="2" /><path d="M6 7h5M14 7h4M6 12h5M14 12h4M6 17h5M14 17h4" stroke="#aaa" strokeWidth="2" /></Svg></button>
        <button aria-label="Network box"><Svg s={17}><rect x="2" y="2" width="20" height="20" fill="#222" stroke="#cfcfcf" strokeWidth="2" /><rect x="5" y="5" width="9" height="5" stroke="#ddd" strokeWidth="2" /><rect x="11" y="14" width="8" height="4" stroke="#ddd" strokeWidth="2" /></Svg></button>
        <button aria-label="Sticky note"><Svg s={17}><path d="M2 2h20v14l-6 6H2z" fill="#eed95c" /><path d="M5 7h13M5 11h10M5 15h6" stroke="#3a3415" strokeWidth="2" /></Svg></button>
        <button aria-label="Background image"><Svg s={17}><path d="M2 1h19v18H2z" fill="#6fa9dc" /><circle cx="7" cy="6" r="3" fill="#f1dd6a" /><path d="M2 19l7-8 5 5 3-4 4 7z" fill="#3d8a7a" /><path d="M18 13v11M13 18h11" stroke="#111" strokeWidth="5" /><path d="M18 14v9M14 18h9" stroke="#fff" strokeWidth="2.5" /></Svg></button>
        <button aria-label="Package" className="mr-[17px]"><Svg s={17}><path d="M3 9h18v11H3z" fill="#c98233" /><path d="M5 3h14l4 6H1z" fill="#e3a558" /><path d="M9 11h6v3H9z" fill="#8a5517" /></Svg></button>
        <button aria-label="Find"><Search /></button>
        <button aria-label="Display"><Svg s={17}><rect x="1" y="1" width="22" height="22" fill="#e3e3e3" /><path d="M3 12c5-7 13-7 18 0-5 6-13 6-18 0z" fill="#fff" stroke="#222" strokeWidth="2" /><circle cx="12" cy="12" r="3.5" fill="#111" /></Svg></button>
      </div>
    </div>
  );
}

/* ---------- playbar ---------- */

function Timeline() {
  const frames = Array.from({ length: 40 }, (_, i) => (i + 1) * 6);
  const pos = (f: number) => `${((f - 1) / 240) * 100}%`;
  return (
    <div className="relative h-[40px]">
      <div className="absolute top-[13px] left-0 h-[9px] w-[66px] bg-[#0d68c8]" />
      <div className="absolute inset-x-0 top-[22px] h-px bg-[#a9a9a9]" />
      {frames.map((f) => (
        <div key={f} className={`absolute w-px bg-[#a9a9a9] ${f % 24 === 0 ? "top-[15px] h-[15px]" : "top-[18px] h-[9px]"}`} style={{ left: pos(f) }} />
      ))}
      {frames.filter((f) => f % 24 === 0).map((f) => (
        <span key={f} className="absolute -top-[2px] text-[10px] leading-[14px] text-[#929292]" style={{ left: pos(f) }}>{f === 240 ? "2" : f}</span>
      ))}
      <svg width="26" height="24" viewBox="0 0 26 24" className="absolute top-px left-0"><path d="M1 22V1h24v17H5z" fill="#000" stroke="#e9e9e9" /></svg>
      <span className="absolute top-px left-[8px] text-[14px] leading-[16px] text-white">1</span>
    </div>
  );
}

const PlayBtn = ({ name, on, small, children }: { name: string; on?: boolean; small?: boolean; children: ReactNode }) => (
  <button aria-label={name} className={`flex h-full items-center justify-center border-r border-b border-black ${small ? "w-[14px]" : "w-[27px]"} ${on ? "bg-[#55769b]" : "bg-linear-to-b from-[#4c4c4c] to-[#3c3c3c]"}`}>
    <Svg s={small ? 11 : 20}>{children}</Svg>
  </button>
);

function Playbar() {
  return (
    <section className="flex h-[72px] shrink-0 border-t-2 border-b border-[#4e4e4e] border-b-black bg-[#2f2f2f]">
      <div className="flex w-[10px] items-end border-r border-black bg-[#3c3c3c] pb-[2px] pl-px"><Down c="#000" /></div>
      <div className="w-[225px] pl-[5px]">
        <div className="mt-[7px] flex h-[28px]">
          <PlayBtn name="First frame"><path d="M3 5v14" stroke="#ddd" strokeWidth="2.5" /><path d="M13 5v14l-8-7zM22 5v14l-8-7z" fill="#ddd" /></PlayBtn>
          <PlayBtn name="Play back"><path d="M17 4v16L6 12z" fill="#ddd" /></PlayBtn>
          <PlayBtn name="Stop" on><rect x="4" y="4" width="16" height="16" fill="#e2e2e2" /></PlayBtn>
          <PlayBtn name="Play"><path d="M7 4v16l11-8z" fill="#ddd" /></PlayBtn>
          <PlayBtn name="Last frame"><path d="M21 5v14" stroke="#ddd" strokeWidth="2.5" /><path d="M11 5v14l8-7zM2 5v14l8-7z" fill="#ddd" /></PlayBtn>
          <input aria-label="Current frame" defaultValue="1" className={`mr-[2px] ml-[3px] h-[28px] w-[47px] border border-[#262626] bg-[#121212] px-[3px] text-[14px] text-[#ddd] ${mono}`} />
          <PlayBtn name="Previous key" small><path d="M13 4v16L1 12z" fill="#ddd" /><path d="M17 4v16" stroke="#ddd" strokeWidth="3" /></PlayBtn>
          <PlayBtn name="Next key" small><path d="M11 4v16l12-8z" fill="#ddd" /><path d="M7 4v16" stroke="#ddd" strokeWidth="3" /></PlayBtn>
        </div>
        <div className="mt-[7px] flex h-[24px]">
          <PlayBtn name="Play options"><path d="M4 2h13M4 5h13" stroke="#888" strokeWidth="2" /><path d="M4 7h13v12H4z" fill="#d5d5d5" /><path d="M11 6l12 11-5 0-4 5z" fill="#111" stroke="#ddd" /></PlayBtn>
          <PlayBtn name="Audio"><path d="M3 9h4l6-7v20l-6-7H3z" fill="#596a6a" stroke="#bbb" /><path d="M13 2c9 3 9 17 0 20" stroke="#aaa" strokeWidth="2" /><ellipse cx="14" cy="12" rx="3" ry="6" stroke="#bbb" strokeWidth="1.5" /></PlayBtn>
          <PlayBtn name="Loop"><path d="M2 19h20M20 18C22 5 12 3 6 9" stroke="#ddd" strokeWidth="3" /><path d="M3 14l1-10 9 8z" fill="#ddd" /></PlayBtn>
          <PlayBtn name="Real time"><circle cx="12" cy="12" r="9" stroke="#d0d0d0" strokeWidth="3" /><path d="M12 6v9M8 12h8" stroke="#ddd" strokeWidth="2" /></PlayBtn>
          <span className="w-[4px]" />
          <span className="flex opacity-50">
            <PlayBtn name="Range start"><path d="M7 6v12" stroke="#566b35" strokeWidth="3" /><path d="M17 6v12l-8-6z" fill="#777" /></PlayBtn>
            <PlayBtn name="Range end"><path d="M17 6v12" stroke="#566b35" strokeWidth="3" /><path d="M7 6v12l8-6z" fill="#777" /></PlayBtn>
          </span>
        </div>
      </div>
      <div className="flex min-w-0 flex-1 flex-col">
        <Timeline />
        <div className="flex items-center pt-[3px]">
          <Field name="Global start" value="1" w="w-[43px] opacity-80" />
          <span className="w-[2px]" />
          <Field name="Range start" value="1" w="w-[43px]" />
          <svg width="7" height="12" viewBox="0 0 7 12"><path d="M0 0l7 6-7 6z" fill="#aaa" /></svg>
          <div className="h-[3px] flex-1 bg-[#757575]" />
          <svg width="7" height="12" viewBox="0 0 7 12"><path d="M7 0L0 6l7 6z" fill="#aaa" /></svg>
          <Field name="Range end" value="240" w="w-[43px]" />
          <span className="w-[2px]" />
          <Field name="Global end" value="240" w="w-[43px] opacity-80" />
        </div>
      </div>
      <div className="flex items-start pl-[5px]">
        <button aria-label="Set key" className="mt-[13px] flex h-[40px] w-[40px] items-center justify-center rounded-full border border-[#1f1f1f] bg-[#343434]"><Svg s={20}><circle cx="15" cy="8" r="5" stroke="#6d6d6d" strokeWidth="3" /><path d="M12 12l-9 9M6 17l4 4" stroke="#6d6d6d" strokeWidth="3" /></Svg></button>
        <DropBtn cls="mt-[22px] -ml-[2px]" />
        <div className="ml-[6px] flex flex-col gap-[4px] pt-[7px]">
          <button aria-label="Channel list" className="flex h-[24px] w-[24px] items-center justify-center border border-black bg-[#4a4a4a]"><Svg s={20}><rect x="1" y="2" width="20" height="18" fill="#cfcfcf" /><path d="M1 3h5v4H1z" fill="#c33" /><path d="M1 8h5v4H1z" fill="#cc3" /><path d="M1 13h5v5H1z" fill="#3a5" /><path d="M9 10a5 5 0 0 1 9-2M18 13a5 5 0 0 1-9 2" stroke="#111" strokeWidth="3" /><path d="M17 15l6 4-6 4z" fill="#aaa" /></Svg></button>
          <button aria-label="Curve editor" className="flex h-[24px] w-[24px] items-center justify-center border border-black bg-[#4a4a4a]"><Svg s={18}><rect width="24" height="24" fill="#0a0a0a" /><path d="M3 12c2-7 4-7 6 0s3 7 5 0" stroke="#e8a13c" strokeWidth="1.5" /><path d="M6 12c2 9 5 9 8 0s6-12 8-2" stroke="#4f8fd6" strokeWidth="1.5" /><path d="M0 12h24" stroke="#e9c48c" strokeWidth="1.5" /></Svg></button>
        </div>
        <div className="ml-[4px] flex w-[159px] flex-col gap-[5px] pt-[7px]">
          <button className="flex h-[24px] w-[154px] items-center border-b border-black bg-linear-to-b from-[#505050] to-[#404040] pr-[5px] pl-[18px] text-[11px] text-[#c4c4c4]">0 keys, 0/0 channels<span className="ml-auto"><Svg s={8} box={8}><path d="M4 0l4 8H0z" fill="#8d8d8d" /></Svg></span></button>
          <Select name="Key scope" value="Key All Channels" w="w-[151px]" />
        </div>
      </div>
    </section>
  );
}

/* ---------- taskbar ---------- */

const TaskBtn = ({ name, children }: { name: string; children: ReactNode }) => (
  <button aria-label={name} className="flex h-full w-[49px] items-center justify-center"><Svg s={24}>{children}</Svg></button>
);

function Taskbar() {
  return (
    <footer className={`flex h-[40px] shrink-0 items-center bg-[#201c1d] ${win}`}>
      <button aria-label="Start" className="flex h-full w-[48px] items-center justify-center"><Svg s={16}><path d="M0 3l10-1v9H0zM11 2l13-2v11H11zM0 13h10v9L0 21zM11 13h13v11l-13-2z" fill="#fff" /></Svg></button>
      <label className="flex h-[40px] w-[344px] items-center border border-[#bbb] bg-[#f2f2f2] pl-[11px]">
        <Svg s={18}><circle cx="15" cy="9" r="7" stroke="#222" strokeWidth="1.5" /><path d="M10 14l-9 9" stroke="#222" strokeWidth="1.5" /></Svg>
        <input aria-label="検索" placeholder="ここに入力して検索" className="ml-[9px] flex-1 bg-transparent text-[13px] outline-none placeholder:text-[#3a3a3a]" />
      </label>
      <TaskBtn name="Cortana"><circle cx="12" cy="12" r="7" stroke="#fff" strokeWidth="2.5" /></TaskBtn>
      <TaskBtn name="Task view"><path d="M4 4v3h11V4M4 20v-3h11v3M4 9h11v6H4zM19 4v4M19 13v7" stroke="#fff" strokeWidth="1.5" /><path d="M18 9h3v3h-3z" fill="#fff" /></TaskBtn>
      <TaskBtn name="Explorer"><path d="M1 3h8l2 2h12v15H1z" fill="#ffd35c" /><path d="M1 3h8l1 3H1z" fill="#d9962a" /><path d="M5 20v-7h14v7h-4v-4H9v4z" fill="#3e93d8" /></TaskBtn>
      <TaskBtn name="Mail"><path d="M0 9l12-8 12 8v13H0z" fill="#0f6cbd" /><path d="M2 8h20v8H2z" fill="#f2f6fa" /><path d="M0 9l12 8 12-8v13H0z" fill="#2fb1f0" /></TaskBtn>
      <TaskBtn name="Dropbox"><rect width="24" height="24" fill="#0061fe" /><path d="M8 5l4 3-4 3-4-3zM16 5l4 3-4 3-4-3zM8 11l4 3-4 3-4-3zM16 11l4 3-4 3-4-3zM12 16l3 2-3 2-3-2z" fill="#fff" /></TaskBtn>
      <TaskBtn name="Opera"><path fillRule="evenodd" d="M12 1a11 11 0 1 0 0 22 11 11 0 0 0 0-22zm0 3c3 0 5 4 5 8s-2 8-5 8-5-4-5-8 2-8 5-8z" fill="#ff1b2d" /></TaskBtn>
      <button aria-label="Houdini" className="flex h-full w-[48px] items-center justify-center border-b-2 border-[#76b9ed] bg-[#4b4949]"><Spiral s={24} line="#4b4949" /></button>
      <button aria-label="Notepad" className="ml-[4px] flex h-full w-[41px] items-center justify-center border-b-2 border-[#76b9ed]"><Svg s={24}><path d="M7 2l13 2 2 18-4 1z" fill="#b8a888" /><path d="M7 2l11 1-1 19-16-4z" fill="#7fbccb" /><path d="M13 5l6-3-1 20-8-2z" fill="#dcecef" /></Svg></button>
      <div className="ml-auto flex items-center gap-[6px] text-white">
        <Svg s={18}><path d="M4 16l8-8 8 8" stroke="#fff" strokeWidth="2" /></Svg>
        <Svg s={18}><rect x="5" y="8" width="10" height="9" rx="2" stroke="#fff" strokeWidth="2" /><path d="M16 12l4-3v7zM6 4c4-3 8-3 12 0M6 20c4 3 8 3 12 0" stroke="#fff" strokeWidth="1.5" /></Svg>
        <Svg s={18}><path d="M2 15c0-6 6-9 10-7 6-2 9 3 9 7H2z" fill="#c9c9c9" /><circle cx="17" cy="17" r="6.5" fill="#e0242c" /><path d="M14 14l6 6M20 14l-6 6" stroke="#fff" strokeWidth="1.5" /></Svg>
        <Svg s={18}><rect x="8" y="7" width="14" height="11" stroke="#fff" strokeWidth="1.5" /><rect x="10" y="9" width="10" height="7" fill="#fff" /><path d="M2 3v4M6 3v4M0 8h8v4H0zM4 12v5h4" stroke="#fff" strokeWidth="1.7" /></Svg>
        <Svg s={18}><path d="M3 20C4 11 11 4 21 4M8 20c0-6 6-12 13-12M12 20c0-4 4-8 9-8" stroke="#eee" strokeWidth="1.7" /><circle cx="19" cy="18" r="2.5" fill="#fff" /></Svg>
        <Svg s={18}><path d="M1 9h4l6-5v16l-6-5H1z" stroke="#fff" strokeWidth="1.7" /><path d="M14 9c2 2 2 4 0 6M17 7c3 3 3 7 0 10M20 5c4 4 4 10 0 14" stroke="#ccc" /></Svg>
        <span className="w-[20px] text-center text-[18px] leading-6">A</span>
        <span className="w-[66px] text-center text-[11px] leading-[18px]"><time>14:55</time><br /><time>2022/12/18</time></span>
        <button aria-label="Notifications" className="mr-[23px] ml-[2px]"><Svg s={20}><path d="M2 3h20v14h-7l-3 4-3-4H2z" stroke="#fff" strokeWidth="1.7" /></Svg></button>
      </div>
    </footer>
  );
}

const SubTabs = ({ tabs, cls }: { tabs: { t: string; on?: boolean; b?: boolean }[]; cls: string }) => (
  <div className={`flex h-[23px] items-stretch border-b border-[#545454] ${cls}`}>
    {tabs.map((t) => (
      <button key={t.t} className={`border border-b-0 border-[#262626] px-[5px] text-[11px] leading-4 text-[#c0c0c0] ${t.b ? "font-bold" : ""} ${t.on ? "bg-[#4a4a4a]" : "bg-[#363636]"}`}>{t.t}</button>
    ))}
  </div>
);

export default function App() {
  return (
    <div className={`flex h-screen min-w-0 flex-col overflow-hidden bg-[#3a3a3a] ${ui}`}>
      <header className={`flex h-[23px] shrink-0 items-center bg-white pl-[2px] ${win}`}>
        <Spiral s={15} line="#fff" />
        <h1 className="ml-[7px] text-[11px] leading-4 text-black">D:/hou/test/polar.hiplc - Houdini Indie Limited-Commercial 19.0.383 - Python 3</h1>
        <div className="mr-[19px] ml-auto flex items-center gap-[34px]">
          <button aria-label="Minimize"><Svg s={11} box={11}><path d="M0 5.5h11" stroke="#000" /></Svg></button>
          <button aria-label="Restore"><Svg s={11} box={11}><path d="M.5 2.5h8v8h-8zM2.5 2.5v-2h8v8h-2" stroke="#000" /></Svg></button>
          <button aria-label="Close"><Svg s={11} box={11}><path d="M0 0l11 11M11 0L0 11" stroke="#000" /></Svg></button>
        </div>
      </header>

      <div className="flex h-[26px] shrink-0 items-center border-b border-black bg-[#363636]">
        <div className="h-full w-[10px] border-r border-black bg-[#454545] pt-[2px] pl-px"><HandleUp /></div>
        <nav className="flex w-[269px] items-center gap-[9px] pl-[6px] text-[12px] leading-4 text-[#bdbdbd]">
          {["File", "Edit", "Render", "Assets", "Windows", "Help"].map((m) => <button key={m}>{m}</button>)}
        </nav>
        <Select name="Desktop" value="Build" w="w-[127px]" pad="pl-[24px]" text="text-[12px]" icon={<Svg s={14}><rect x="1" y="2" width="22" height="20" stroke="#b5b5b5" strokeWidth="2" /><path d="M9 2v20M9 12h14" stroke="#b5b5b5" strokeWidth="2" /></Svg>} />
        <span className="w-[5px]" />
        <Select name="Radial menu" value="Main" w="w-[127px]" pad="pl-[24px]" text="text-[12px]" icon={<Svg s={14}><circle cx="12" cy="12" r="8" stroke="#b5b5b5" strokeWidth="2" /><circle cx="12" cy="12" r="3" fill="#ccc" /><path d="M12 0l3 4H9zM12 24l3-4H9zM0 12l4-3v6zM24 12l-4-3v6z" fill="#ccc" /></Svg>} />
        <span className="ml-auto" />
        <Select name="Take" value="Main" w="w-[171px]" pad="pl-[24px]" text="text-[12px]" icon={<Clapper s={16} />} />
        <button aria-label="Help" className="mx-[8px]"><Round t="?" /></button>
      </div>

      <div className="flex shrink-0">
        <div className="w-[10px] border-r border-b border-black bg-[#454545] pt-[2px] pl-px"><HandleUp /></div>
        <Shelf tabs={leftTabs} tools={leftTools} grow="flex-[879]" />
        <div className="flex w-[10px] items-center justify-center border-x border-b border-black bg-[#3f3f3f]">
          <svg width="5" height="16" viewBox="0 0 5 16"><path d="M1 0v16M4 0v16" stroke="#0a0a0a" strokeWidth="2" strokeDasharray="2 1" /></svg>
        </div>
        <Shelf tabs={rightTabs} tools={rightTools} grow="flex-[1021]" />
      </div>

      <main className="flex min-h-0 flex-1">
        <section className="flex min-w-0 flex-[864] flex-col">
          <PaneTabs tabs={[{ t: "/obj/geo1/dopnet2", w: "w-[114px]", on: true, it: true }, { t: "Tree View", w: "w-[78px]" }, { t: "Material Palette", w: "w-[101px]" }, { t: "Asset Browser", w: "w-[94px]" }]} />
          <PathBar back />
          <NetworkMenu />
          <Network />
        </section>

        <Splitter />

        <section className="flex min-w-0 flex-[566] flex-col">
          <PaneTabs tabs={[{ t: "sopgeo1", w: "w-[71px]", on: true, b: true }]} />
          <PathBar pinned />
          <ParmHeader icon={<CubeIcon />} title="SOP Geometry" name="sopgeo1" />
          <div className="flex shrink-0">
            <div className="min-w-0 flex-1">
              <div className="pt-[2px] pr-[10px]">
                <Row knob><Check label="Use External SOP" on /></Row>
                <Row knob label="SOP Path" id="sop"><Field id="sop" value="/obj/geo1/null2" bold /><span className="ml-[5px] flex gap-[6px] pr-[3px]"><button aria-label="Jump to operator"><Jump /></button><button aria-label="Choose operator"><Chooser /></button></span></Row>
                <Row knob label="Primitive Group" id="pg"><Field id="pg" /></Row>
                <Row knob label="Time" id="time"><Field id="time" value="0" tone="green" w="w-[74px] mr-[3px]" /><Slider name="Time slider" pct={0} /></Row>
                <Row knob><Check label="Use Object Transform" /></Row>
                <Row knob dim label="Transform Time" id="tt"><Field id="tt" value="0" tone="off" w="w-[74px] mr-[3px]" /><Slider name="Transform time slider" pct={0} off /></Row>
                <Row knob><Check label="Re-evaluate SOPs to Interpolate Geometry" /></Row>
                <Row knob label="Position Data Path" id="pdp"><Field id="pdp" value="../Position" /></Row>
                <Row knob low label="Number of Stamps" id="ns" h="h-[28px]">
                  <Field id="ns" value="0" w="w-[125px]" />
                  <button className="h-[22px] w-[17px] border border-black bg-[#474747] text-[12px] leading-4 text-[#ccc]">+</button>
                  <button className="h-[22px] w-[17px] border border-black bg-[#3c3c3c] text-[12px] leading-4 text-[#777]">−</button>
                  <button disabled className="ml-[2px] h-[22px] w-[58px] bg-[#363636] text-[11px] leading-4 text-[#777]">Clear</button>
                </Row>
                <div className="pt-2">
                  <Row label="Default Operation" id="dop" h="h-[26px]"><Select id="dop" value="Set Initial" w="w-[101px]" /></Row>
                  <Row label="Data Sharing" id="ds" h="h-[26px]"><Select id="ds" value="Do Not Share Data" w="w-[186px]" /></Row>
                  <Row label="Activation" id="act"><Field id="act" value="1" tone="green" w="w-[74px] mr-[5px]" /><Slider name="Activation slider" pct={10} ticks /><DropBtn cls="-mr-[6px] ml-[12px]" /></Row>
                  <Row label="Group" id="grp"><Field id="grp" value="*" /><DropBtn cls="mr-[2px] ml-[3px]" /></Row>
                  <Row label="Data Name" id="dn"><Field id="dn" value="Geometry" /></Row>
                  <Row h="h-[22px]"><Check label="Unique Data Name" /></Row>
                </div>
              </div>
              <div className="mt-[2px] mr-[15px] ml-[2px] border-b-8 border-[#262626]">
                <table className="w-full border-collapse text-left text-[11px] leading-4 text-[#bdbdbd]">
                  <thead>
                    <tr className="bg-[#2f2f2f]"><th className="w-[17px] border border-black" /><th className="border border-black px-[3px] font-normal">Input Operators (Drag/Drop to reorder)</th><th className="w-[17px] border border-black" /></tr>
                  </thead>
                  <tbody>
                    <tr>
                      <td className="border border-[#888] bg-[#2f2f2f] pl-[2px]"><Svg s={12}><circle cx="12" cy="12" r="11" fill="#3f7fd4" /><path d="M12 4l7 8h-4v7H9v-7H5z" fill="#e8f0fa" /></Svg></td>
                      <td className="px-[3px]">smokeobject_sparse4</td>
                      <td className="border border-[#888] bg-[#2f2f2f] pl-px"><button aria-label="Remove input" className="block"><Svg s={13}><circle cx="12" cy="12" r="11" fill="#e25a5a" /><path d="M7 7l10 10M17 7L7 17" stroke="#111" strokeWidth="4" /></Svg></button></td>
                    </tr>
                  </tbody>
                </table>
              </div>
            </div>
            <ScrollBar thumb="h-[332px]" />
          </div>
          <div className="flex h-[7px] shrink-0 items-center justify-center gap-[20px] border border-[#5a5a5a] bg-[#3f3f3f]">
            <Svg s={5} box={8}><path d="M4 0l4 8H0z" fill="#999" /></Svg><span className="w-[20px] border-y-2 border-dotted border-[#888]" /><Svg s={5} box={8}><path d="M4 8l4-8H0z" fill="#999" /></Svg>
          </div>
          <PaneTabs tabs={[{ t: "Parameters", w: "w-[84px]", on: true, b: true }]} />
          <PathBar pinned />
          <ParmHeader icon={<CapsuleIcon />} title="Gas Particle to Field" name="gasparticletofield1" />
          <div className="flex min-h-0 flex-1 overflow-hidden">
            <div className="min-w-0 flex-1 overflow-hidden pt-[2px] pr-[10px]">
              <Row knob label="Destination Field" id="df"><Field id="df" value="vel" bold /></Row>
              <Row knob label="Particles" id="pt"><Field id="pt" value="Geometry" /></Row>
              <Row knob label="Particle Group" id="ptg"><Field id="ptg" /></Row>
              <Row knob><Check label="Use Attribute" on /></Row>
              <Row knob label="Attribute" id="at"><Field id="at" value="P" bold /></Row>
              <Row knob><Check label="Accumulated" /></Row>
              <Row knob><Check label="Assume Uniform Radius" /></Row>
              <Row knob><Check label="Extrapolated" on /></Row>
              <Row knob dim label="Extrapolation Ind…" id="ei"><Field id="ei" tone="off" /></Row>
              <Row knob dim><Check label="Use Max Extrapolate Cells" on /></Row>
            </div>
            <ScrollBar thumb="h-[46px]" />
          </div>
        </section>

        <Splitter />

        <section className="flex min-w-0 flex-[478] flex-col">
          <PaneTabs end tabs={[{ t: "Scene Vi…", w: "w-[69px]" }, { t: "gasresi…", w: "w-[66px]", on: true, it: true }, { t: "Render…", w: "w-[70px]" }, { t: "Composi…", w: "w-[73px]" }, { t: "Motion…", w: "w-[67px]" }, { t: "Geometr…", w: "w-[74px]" }]} />
          <PathBar back />
          <ParmHeader icon={<CapsuleIcon />} title="Gas Resize Fluid Dynamic" name="gasresizefluiddynamic1" />
          <div className="pt-[2px] pr-[11px]">
            <Row label="Fluid Type" id="ft"><Select id="ft" value="Smoke and Pyro" w="w-[130px]" /></Row>
            <Row label="Extra Resize Fields" id="erf"><Field id="erf" /></Row>
            <Row label="Delay Frames" id="dfm"><Field id="dfm" value="0" w="w-[74px] mr-[4px]" /><Slider name="Delay slider" pct={0} ticks /></Row>
            <Row h="h-[22px]"><Check label="Full Tile Mode" /></Row>
          </div>
          <SubTabs cls="mt-[2px] ml-[2px]" tabs={[{ t: "Bounds", on: true, b: true }, { t: "Max Bounds", b: true }, { t: "Distribution" }]} />
          <div className="pt-[3px] pr-[11px] pb-[2px]">
            <Row label="Padding" id="pad"><Field id="pad" value="0.3" w="w-[74px] mr-[5px]" /><Slider name="Padding slider" pct={30} /></Row>
            <Row check label="Subtract Threshold" id="st"><Field id="st" value="0.2" w="w-[74px] mr-[5px]" /><Slider name="Threshold slider" pct={20} /></Row>
            {["Lower Padding Scale", "Upper Padding Scale"].map((l) => (
              <Row key={l} label={l} id={l}>
                <div className="grid min-w-0 flex-1 grid-cols-3 gap-[3px]"><Field id={l} value="1" /><Field name={`${l} y`} value="1" /><Field name={`${l} z`} value="1" /></div>
              </Row>
            ))}
          </div>
          <SubTabs cls="ml-[9px]" tabs={[{ t: "Field" }, { t: "Tracking Object", on: true, b: true }]} />
          <div className="bg-[#353535] pt-[4px] pr-[11px] pb-[6px]">
            <Row check label="Track By Object" id="tbo"><Select id="tbo" value="Dop" w="w-[70px]" bold /></Row>
            <Row dim label="Sop Path" id="sp"><Field id="sp" tone="off" /><span className="ml-[5px] flex gap-[6px] pr-[3px]"><button aria-label="Jump to operator"><Jump /></button><button aria-label="Choose operator" className="opacity-40"><Chooser /></button></span></Row>
            <Row label="Dop Path" id="dp"><Field id="dp" value="Geometry" bold /></Row>
          </div>
        </section>
      </main>

      <Playbar />

      <div className="flex h-[25px] shrink-0 items-center bg-[#191919] text-[11px] leading-4 text-[#b5b5b5]">
        <p className="pb-[3px] pl-[3px]">Successfully saved polar.hiplc (Sun Dec 18 14:54:50 2022)</p>
        <button aria-label="Cook" className="ml-auto flex h-full w-[27px] items-center justify-center bg-[#3a3a3a]"><Svg s={18}><path d="M3 14c-2-7 5-11 11-9 7 1 8 9 4 12l-8 1z" fill="#b9b9b9" /><path d="M17 15l6 5-6 4z" fill="#999" /></Svg></button>
        <Select name="Cook path" value="/obj/geo1/dop..." w="w-[126px]" h="h-full" pad="pl-[14px]" />
        <button aria-label="Refresh" className="flex h-full w-[29px] items-center justify-center bg-[#303030]"><Svg s={16}><path d="M4 11a8 8 0 0 1 15-3M20 13a8 8 0 0 1-15 3" stroke="#6d6d6d" strokeWidth="3" /><path d="M21 3v8h-8zM3 21v-8h8z" fill="#6d6d6d" /></Svg></button>
        <Select name="Update mode" value="Auto Update" w="w-[118px]" h="h-full" pad="pl-[16px]" />
      </div>

      <Taskbar />
    </div>
  );
}
